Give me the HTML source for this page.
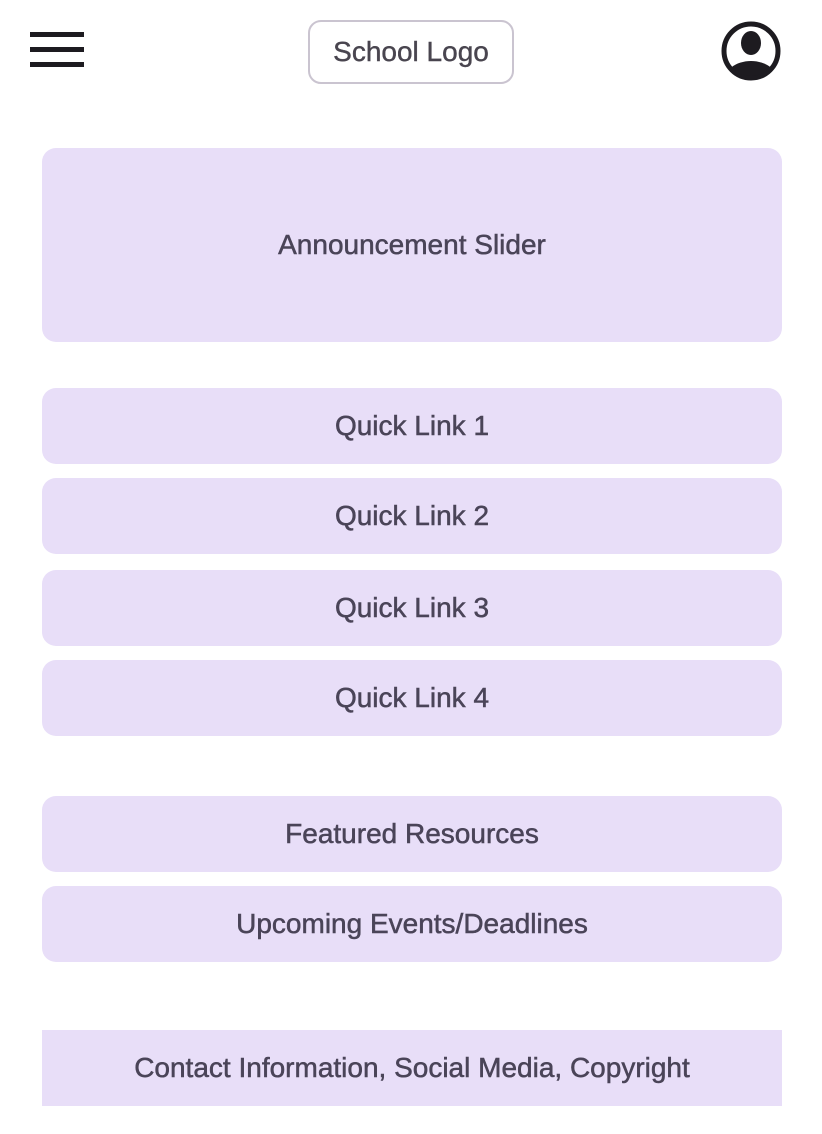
<!DOCTYPE html>
<html><head><meta charset="utf-8"><style>
html,body{margin:0;padding:0;background:#fff;width:822px;height:1134px;overflow:hidden;font-family:"Liberation Sans",sans-serif;}
.b{position:absolute;left:42px;width:740px;background:#E8DEF8;border-radius:14px;display:flex;align-items:center;justify-content:center;color:#4A4458;font-size:28px;-webkit-text-stroke:0.5px #4A4458;}
.h{position:absolute;left:30px;width:54px;height:5px;background:#1D1B20;}
</style></head><body>
<div class="h" style="top:32px"></div>
<div class="h" style="top:47px"></div>
<div class="h" style="top:62px"></div>
<div style="position:absolute;left:308px;top:20px;width:202px;height:60px;border:2px solid #CAC4D0;border-radius:13px;display:flex;align-items:center;justify-content:center;font-size:28px;color:#49454F;-webkit-text-stroke:0.4px #49454F;">School Logo</div>
<svg style="position:absolute;left:721px;top:21px" width="60" height="60" viewBox="0 0 60 60">
<defs><clipPath id="c"><circle cx="30" cy="30" r="25"/></clipPath></defs>
<circle cx="30" cy="30" r="27" fill="none" stroke="#1D1B20" stroke-width="5"/>
<ellipse cx="30" cy="22" rx="10" ry="12" fill="#1D1B20"/>
<ellipse cx="30" cy="62" rx="28" ry="22" fill="#1D1B20" clip-path="url(#c)"/>
</svg>
<div class="b" style="top:148px;height:194px">Announcement Slider</div>
<div class="b" style="top:388px;height:76px">Quick Link 1</div>
<div class="b" style="top:478px;height:76px">Quick Link 2</div>
<div class="b" style="top:570px;height:76px">Quick Link 3</div>
<div class="b" style="top:660px;height:76px">Quick Link 4</div>
<div class="b" style="top:796px;height:76px">Featured Resources</div>
<div class="b" style="top:886px;height:76px">Upcoming Events/Deadlines</div>
<div class="b" style="top:1030px;height:76px;border-radius:0">Contact Information, Social Media, Copyright</div>
</body></html>
